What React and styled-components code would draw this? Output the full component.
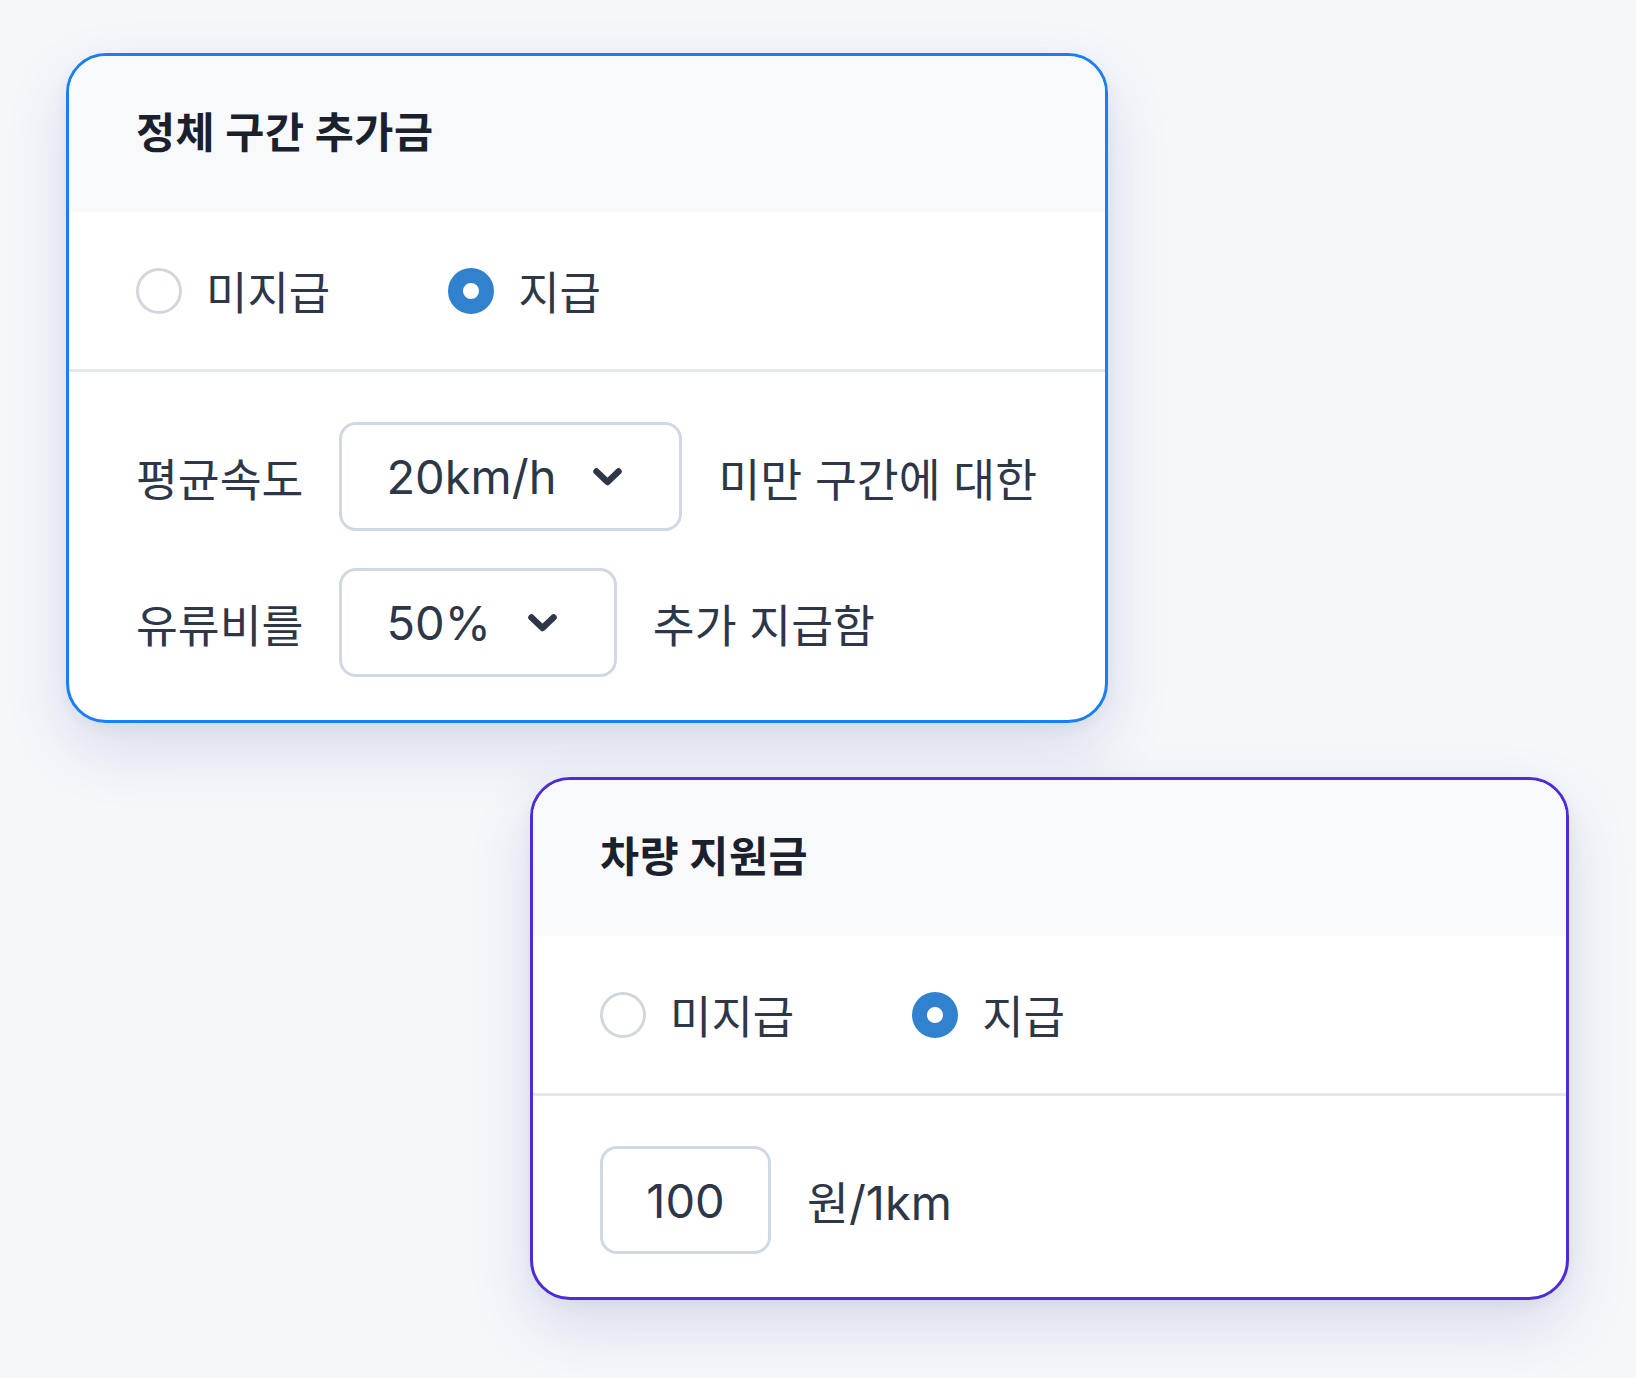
import React from "react";
import styled, { createGlobalStyle } from "styled-components";

const Global = createGlobalStyle`
  html, body { margin: 0; padding: 0; }
  body {
    background: #f5f7fb;
    font-family: Inter, "Noto Sans CJK KR", "Noto Sans", sans-serif;
    color: #2d3748;
  }
`;

const Page = styled.div`
  min-height: 1378px;
  box-sizing: border-box;
  padding: 53px 0 0 66px;
  display: flex;
  flex-direction: column;
  gap: 54px;
`;

const Card = styled.section`
  width: ${(p) => p.$width}px;
  margin-left: ${(p) => p.$offset || 0}px;
  box-sizing: border-box;
  border: 3px solid ${(p) => p.$accent};
  border-radius: 40px;
  background: #fff;
  overflow: hidden;
  box-shadow: 0 26px 64px rgba(40, 60, 110, 0.14), 0 4px 14px rgba(40, 60, 110, 0.05);
`;

const Header = styled.header`
  height: 156px;
  box-sizing: border-box;
  background: #f8f9fb;
  display: flex;
  align-items: center;
  padding: 0 67px 10px;
`;

const Title = styled.h2`
  margin: 0;
  font-family: "Noto Sans CJK KR", sans-serif;
  font-size: 42.5px;
  font-weight: 700;
  color: #1a202c;
  letter-spacing: 0.5px;
`;

const RadioRow = styled.div`
  height: 157px;
  border-bottom: 3px solid #e4e9f0;
  display: flex;
  align-items: center;
  padding: 0 67px;
  gap: 118px;
`;

const Option = styled.label`
  display: flex;
  align-items: center;
  gap: 24px;
  font-size: 45px;
  color: #2d3748;
`;

const RadioDot = styled.span`
  width: 46px;
  height: 46px;
  box-sizing: border-box;
  border-radius: 50%;
  border: ${(p) => (p.$checked ? "15px solid #3182ce" : "3px solid #d2d6dd")};
  background: #fff;
  flex-shrink: 0;
`;

const Body = styled.div`
  padding: 50px 67px 43px;
  display: flex;
  flex-direction: column;
  gap: 37px;
`;

const Row = styled.div`
  display: flex;
  align-items: center;
  gap: 36px;
  font-size: 45.5px;
  color: #2d3748;
  white-space: nowrap;
`;

const Latin = styled.span`
  font-size: 47px;
`;

const Select = styled.div`
  height: 109px;
  box-sizing: border-box;
  border: 3px solid #cfd8e3;
  border-radius: 17px;
  display: flex;
  align-items: center;
  gap: 36px;
  padding: 0 56px 0 44px;
  background: #fff;
`;

const NumberBox = styled.div`
  width: 171px;
  height: 108px;
  box-sizing: border-box;
  border: 3px solid #cfd8e3;
  border-radius: 17px;
  display: flex;
  align-items: center;
  justify-content: center;
  background: #fff;
`;

const Chevron = () => (
  <svg width="31" height="20" viewBox="0 0 31 20" fill="none">
    <path d="M4.5 4.5 L15.5 15 L26.5 4.5" stroke="#2d3748" strokeWidth="6.5" strokeLinecap="round" strokeLinejoin="round" />
  </svg>
);

const RadioGroup = () => (
  <RadioRow>
    <Option>
      <RadioDot />
      미지급
    </Option>
    <Option>
      <RadioDot $checked />
      지급
    </Option>
  </RadioRow>
);

export default function App() {
  return (
    <>
      <Global />
      <Page>
        <Card $accent="#1a7ff5" $width={1042}>
          <Header>
            <Title>정체 구간 추가금</Title>
          </Header>
          <RadioGroup />
          <Body>
            <Row>
              평균속도
              <Select>
                <Latin>20km/h</Latin>
                <Chevron />
              </Select>
              미만 구간에 대한
            </Row>
            <Row>
              유류비를
              <Select>
                <Latin>50%</Latin>
                <Chevron />
              </Select>
              추가 지급함
            </Row>
          </Body>
        </Card>
        <Card $accent="#4f2bd6" $width={1039} $offset={464}>
          <Header>
            <Title>차량 지원금</Title>
          </Header>
          <RadioGroup />
          <Body>
            <Row>
              <NumberBox>
                <Latin>100</Latin>
              </NumberBox>
              <span>
                원<Latin>/1km</Latin>
              </span>
            </Row>
          </Body>
        </Card>
      </Page>
    </>
  );
}
